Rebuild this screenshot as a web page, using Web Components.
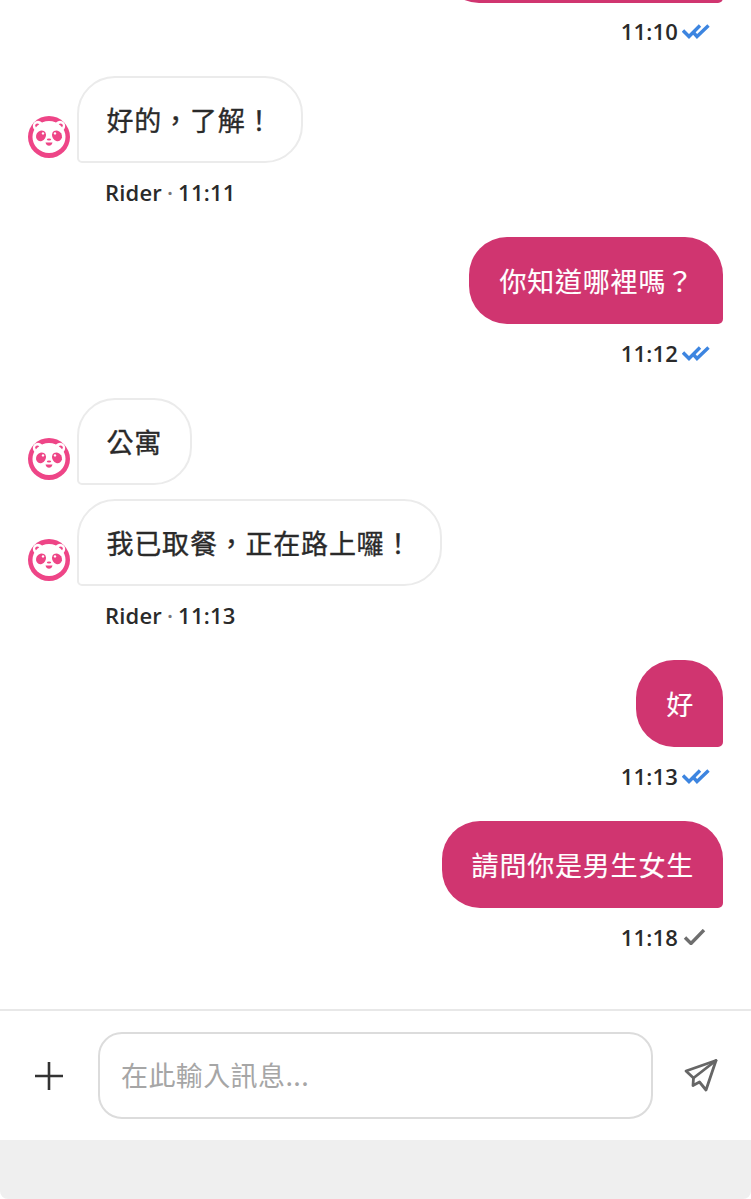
<!DOCTYPE html>
<html lang="zh-Hant">
<head>
<meta charset="utf-8">
<title>Chat</title>
<style>
    html, body {
        margin: 0;
        padding: 0;
        background: #fff;
    }
    body {
        font-family: "Noto Sans CJK TC", "Noto Sans", sans-serif;
        color: #2a2a2a;
    }
</style>
</head>
<body>
<chat-app>
    <chat-log>
        <chat-bubble side="out" clipped></chat-bubble>
        <chat-time time="11:10" state="read"></chat-time>

        <chat-bubble side="in" spaced>好的，了解！</chat-bubble>
        <chat-time sender="Rider" time="11:11"></chat-time>

        <chat-bubble side="out" spaced>你知道哪裡嗎？</chat-bubble>
        <chat-time time="11:12" state="read"></chat-time>

        <chat-bubble side="in" spaced>公寓</chat-bubble>
        <chat-bubble side="in">我已取餐，正在路上囉！</chat-bubble>
        <chat-time sender="Rider" time="11:13"></chat-time>

        <chat-bubble side="out" spaced>好</chat-bubble>
        <chat-time time="11:13" state="read"></chat-time>

        <chat-bubble side="out" spaced>請問你是男生女生</chat-bubble>
        <chat-time time="11:18" state="sent"></chat-time>
    </chat-log>
    <chat-composer placeholder="在此輸入訊息..."></chat-composer>
</chat-app>

<script>
class ChatApp extends HTMLElement {
    constructor() {
        super();
        this.attachShadow({ mode: "open" });
        this.shadowRoot.innerHTML = `
            <style>
                :host {
                    display: flex;
                    flex-direction: column;
                    height: 1199px;
                    overflow: hidden;
                }
                .bar {
                    height: 59px;
                    background: #efefef;
                    border-radius: 0 0 8px 8px;
                }
            </style>
            <slot></slot>
            <div class="bar"></div>
        `;
    }
}

class ChatLog extends HTMLElement {
    constructor() {
        super();
        this.attachShadow({ mode: "open" });
        this.shadowRoot.innerHTML = `
            <style>
                :host {
                    display: flex;
                    flex-direction: column;
                    flex: 1;
                    gap: 14px;
                    min-height: 0;
                    padding: 0 28px;
                }
            </style>
            <slot></slot>
        `;
    }
}

class ChatBubble extends HTMLElement {
    constructor() {
        super();
        this.attachShadow({ mode: "open" });
        this.shadowRoot.innerHTML = `
            <style>
                :host {
                    display: flex;
                    align-items: flex-end;
                    gap: 7px;
                }
                :host([side="out"]) {
                    justify-content: flex-end;
                }
                :host([spaced]) {
                    margin-top: 16px;
                }
                :host([clipped]) {
                    margin-top: -84px;
                    margin-bottom: -1px;
                }
                .avatar {
                    flex: none;
                    width: 42px;
                    height: 42px;
                    margin-bottom: 5px;
                }
                :host([side="out"]) .avatar {
                    display: none;
                }
                .text {
                    box-sizing: border-box;
                    height: 87px;
                    display: flex;
                    align-items: center;
                    padding: 0 27.500px;
                    font-size: 27px;
                    font-weight: 400;
                    -webkit-text-stroke: .35px currentColor;
                    letter-spacing: .8px;
                    white-space: nowrap;
                    border-radius: 38px 38px 38px 5px;
                    border: 2px solid #ebebeb;
                    background: #fff;
                    color: #2a2a2a;
                }
                :host([side="out"]) .text {
                    border: 0;
                    padding: 0 29px 0 30px;
                    border-radius: 38px 38px 5px 38px;
                    background: #d03570;
                    color: #fff;
                    -webkit-text-stroke: .15px currentColor;
                }
                :host([clipped]) .text {
                    width: 282px;
                }
            </style>
            <svg class="avatar" viewBox="0 0 42 42">
                <circle cx="21" cy="21" r="21" fill="#ee4587"/>
                <circle cx="10" cy="10" r="5.200" fill="#fff"/>
                <circle cx="32" cy="10" r="5.200" fill="#fff"/>
                <circle cx="9.400" cy="9.600" r="2.200" fill="#ee4587"/>
                <circle cx="32.600" cy="9.600" r="2.200" fill="#ee4587"/>
                <ellipse cx="21" cy="21" rx="16.500" ry="16" fill="#fff"/>
                <ellipse cx="13" cy="19.800" rx="4.800" ry="5.600" transform="rotate(32 13 19.800)" fill="#ee4587"/>
                <ellipse cx="29" cy="19.800" rx="4.800" ry="5.600" transform="rotate(-32 29 19.800)" fill="#ee4587"/>
                <circle cx="15" cy="17.400" r="1.200" fill="#fff"/>
                <circle cx="27" cy="17.400" r="1.200" fill="#fff"/>
                <ellipse cx="21" cy="23.500" rx="2.200" ry="1.100" fill="#ee4587"/>
                <path d="M17.500 26.500h7c-.5 2.400-2 3.200-3.500 3.200s-3-.8-3.500-3.200z" fill="#ee4587"/>
            </svg>
            <div class="text"><slot></slot></div>
        `;
    }
}

class ChatTime extends HTMLElement {
    constructor() {
        super();
        this.attachShadow({ mode: "open" });
    }

    connectedCallback() {
        const sender = this.getAttribute("sender");
        const time = this.getAttribute("time") || "";
        const state = this.getAttribute("state");

        let icon = "";
        if (state === "read") {
            icon = `<svg viewBox="0 0 28 16" width="28" height="16" fill="none" stroke="#3d85e0" stroke-width="3.400">
                <path d="M1 7.500l6 6 11-11"/>
                <path d="M10.500 8.500l4.500 5 11.500-11"/>
            </svg>`;
        } else if (state === "sent") {
            icon = `<svg viewBox="0 0 28 16" width="28" height="16" fill="none" stroke="#6e6e6e" stroke-width="3.400">
                <path d="M3 8.500l6 6 13-13.500"/>
            </svg>`;
        }

        this.shadowRoot.innerHTML = `
            <style>
                :host {
                    display: flex;
                    align-items: center;
                    height: 30px;
                    font-family: "Open Sans", "Noto Sans", sans-serif;
                    font-size: 22px;
                    font-weight: 600;
                    letter-spacing: .2px;
                    color: #2a2a2a;
                    white-space: nowrap;
                }
                :host([state]) {
                    justify-content: flex-end;
                    gap: 4px;
                    padding-right: 13px;
                }
                :host([sender]) {
                    padding-left: 77px;
                    word-spacing: -1px;
                }
                svg {
                    flex: none;
                }
                .dot {
                    color: #777;
                }
            </style>
            ${sender ? `<span>${sender} <span class="dot">·</span> ${time}</span>` : `<span>${time}</span>`}
            ${icon}
        `;
    }
}

class ChatComposer extends HTMLElement {
    constructor() {
        super();
        this.attachShadow({ mode: "open" });
    }

    connectedCallback() {
        const placeholder = this.getAttribute("placeholder") || "";

        this.shadowRoot.innerHTML = `
            <style>
                :host {
                    display: flex;
                    align-items: center;
                    box-sizing: border-box;
                    height: 131px;
                    padding: 0 33px;
                    border-top: 2px solid #e8e8e8;
                    background: #fff;
                }
                .plus {
                    flex: none;
                    width: 32px;
                    height: 32px;
                }
                .field {
                    flex: 1;
                    box-sizing: border-box;
                    height: 87px;
                    margin: 0 31px 0 33px;
                    padding: 0 21px 3px;
                    display: flex;
                    align-items: center;
                    border: 2px solid #dcdcdc;
                    border-radius: 24px;
                    font-size: 27px;
                    letter-spacing: .4px;
                    color: #a6a6a6;
                }
                .send {
                    flex: none;
                    width: 34px;
                    height: 34px;
                }
            </style>
            <svg class="plus" viewBox="0 0 32 32" fill="none" stroke="#333" stroke-width="2.600">
                <path d="M2 16h28M16 2v28"/>
            </svg>
            <div class="field">${placeholder}</div>
            <svg class="send" viewBox="0 0 34 34" fill="none" stroke="#666" stroke-width="2.800" stroke-linejoin="round" stroke-linecap="round">
                <path d="M32 1.500L2 12l7.500 7-.5 7.500 6.500-3.500 6.500 8z"/>
                <path d="M32 1.500L9.500 19"/>
            </svg>
        `;
    }
}

customElements.define("chat-app", ChatApp);
customElements.define("chat-log", ChatLog);
customElements.define("chat-bubble", ChatBubble);
customElements.define("chat-time", ChatTime);
customElements.define("chat-composer", ChatComposer);
</script>
</body>
</html>
